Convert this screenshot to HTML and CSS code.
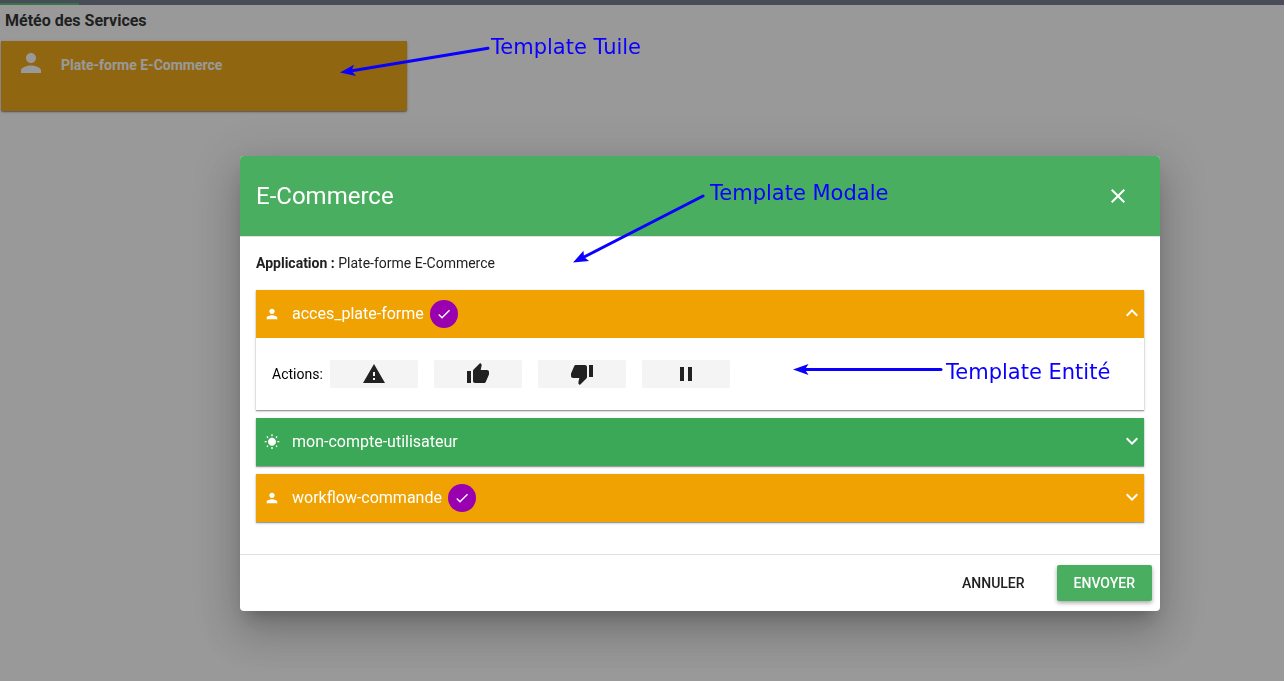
FILE: index.html
```html
<!DOCTYPE html>
<html lang="fr">
<head>
<meta charset="utf-8">
<title>Météo des Services</title>
<link rel="stylesheet" href="styles.css">
</head>
<body>
<svg class="sprite" aria-hidden="true">
  <symbol id="person" viewBox="0 0 24 24"><path d="M12 12c2.21 0 4-1.79 4-4s-1.79-4-4-4-4 1.79-4 4 1.79 4 4 4zm0 2c-2.67 0-8 1.34-8 4v2h16v-2c0-2.66-5.33-4-8-4z"/></symbol>
  <symbol id="sun" viewBox="0 0 24 24"><path d="M6.76 4.84l-1.8-1.79-1.41 1.41 1.79 1.79 1.42-1.41zM4 10.5H1v2h3v-2zm9-9.95h-2V3.5h2V.55zm7.45 3.91l-1.41-1.41-1.79 1.79 1.41 1.41 1.79-1.79zm-3.21 13.7l1.79 1.8 1.41-1.41-1.8-1.79-1.4 1.4zM20 10.5v2h3v-2h-3zm-8-5c-3.31 0-6 2.69-6 6s2.69 6 6 6 6-2.69 6-6-2.69-6-6-6zm-1 16.95h2V19.5h-2v2.95zm-7.45-3.91l1.41 1.41 1.79-1.8-1.41-1.41-1.79 1.8z"/></symbol>
  <symbol id="check" viewBox="0 0 24 24"><path d="M9 16.17L4.83 12l-1.42 1.41L9 19 21 7l-1.41-1.41z"/></symbol>
  <symbol id="close" viewBox="0 0 24 24"><path d="M19 6.41L17.59 5 12 10.59 6.41 5 5 6.41 10.59 12 5 17.59 6.41 19 12 13.41 17.59 19 19 17.59 13.41 12z"/></symbol>
  <symbol id="warning" viewBox="0 0 24 24"><path d="M1 21h22L12 2 1 21zm12-3h-2v-2h2v2zm0-4h-2v-4h2v4z"/></symbol>
  <symbol id="thumb-up" viewBox="0 0 24 24"><path d="M1 21h4V9H1v12zm22-11c0-1.1-.9-2-2-2h-6.31l.95-4.57.03-.32c0-.41-.17-.79-.44-1.06L14.17 1 7.59 7.59C7.22 7.95 7 8.45 7 9v10c0 1.1.9 2 2 2h9c.83 0 1.54-.5 1.84-1.22l3.02-7.05c.09-.23.14-.47.14-.73v-2z"/></symbol>
  <symbol id="thumb-down" viewBox="0 0 24 24"><path d="M15 3H6c-.83 0-1.54.5-1.84 1.22l-3.02 7.05c-.09.23-.14.47-.14.73v2c0 1.1.9 2 2 2h6.31l-.95 4.57-.03.32c0 .41.17.79.44 1.06L9.83 23l6.59-6.59c.36-.36.58-.86.58-1.41V5c0-1.1-.9-2-2-2zm4 0v12h4V3h-4z"/></symbol>
  <symbol id="pause" viewBox="0 0 24 24"><path d="M6 19h4V5H6v14zm8-14v14h4V5h-4z"/></symbol>
  <symbol id="more" viewBox="0 0 24 24"><path d="M16.59 8.59L12 13.17 7.41 8.59 6 10l6 6 6-6z"/></symbol>
  <symbol id="less" viewBox="0 0 24 24"><path d="M12 8l-6 6 1.41 1.41L12 10.83l4.59 4.58L18 14z"/></symbol>
</svg>

<main class="page">
  <div class="topbar"><div class="topbar-progress"></div></div>
  <h1 class="page-title">Météo des Services</h1>
  <section class="tile">
    <svg class="icon icon-tile"><use href="#person"/></svg>
    <h2 class="tile-name">Plate-forme E-Commerce</h2>
  </section>
</main>

<div class="backdrop">
  <div class="dialog" role="dialog" aria-modal="true" aria-labelledby="dialog-title">
    <header class="dialog-head">
      <h2 class="dialog-title" id="dialog-title">E-Commerce</h2>
      <button class="close" type="button" aria-label="Fermer"><svg class="icon"><use href="#close"/></svg></button>
    </header>
    <div class="dialog-body">
      <p class="application"><strong>Application :</strong> Plate-forme E-Commerce</p>
      <div class="entities">
        <section class="entity">
          <button class="entity-head warn" type="button" aria-expanded="true">
            <svg class="icon icon-small"><use href="#person"/></svg>
            <span class="entity-name">acces_plate-forme</span>
            <span class="badge"><svg class="icon icon-small"><use href="#check"/></svg></span>
            <svg class="icon chevron"><use href="#less"/></svg>
          </button>
          <div class="actions">
            <span class="actions-label">Actions:</span>
            <div class="actions-list">
              <button class="action" type="button" aria-label="Alerte"><svg class="icon"><use href="#warning"/></svg></button>
              <button class="action" type="button" aria-label="Approuver"><svg class="icon"><use href="#thumb-up"/></svg></button>
              <button class="action" type="button" aria-label="Refuser"><svg class="icon"><use href="#thumb-down"/></svg></button>
              <button class="action" type="button" aria-label="Pause"><svg class="icon"><use href="#pause"/></svg></button>
            </div>
          </div>
        </section>
        <section class="entity">
          <button class="entity-head ok" type="button" aria-expanded="false">
            <svg class="icon icon-small"><use href="#sun"/></svg>
            <span class="entity-name">mon-compte-utilisateur</span>
            <svg class="icon chevron"><use href="#more"/></svg>
          </button>
        </section>
        <section class="entity">
          <button class="entity-head warn" type="button" aria-expanded="false">
            <svg class="icon icon-small"><use href="#person"/></svg>
            <span class="entity-name">workflow-commande</span>
            <span class="badge"><svg class="icon icon-small"><use href="#check"/></svg></span>
            <svg class="icon chevron"><use href="#more"/></svg>
          </button>
        </section>
      </div>
    </div>
    <footer class="dialog-foot">
      <button class="btn" type="button">ANNULER</button>
      <button class="btn btn-primary" type="button">ENVOYER</button>
    </footer>
  </div>
</div>

<div class="notes">
  <svg class="arrows" aria-hidden="true">
    <path class="shaft" d="M488 48.300L352 70.700"/>
    <path class="shaft" d="M703 196L584 257"/>
    <path class="shaft" d="M941 369.500H805"/>
    <path class="tip" d="M340 72.500L354 64.700L351.500 70.700L356 76z"/>
    <path class="tip" d="M573 262.500L583.500 250.700L584 257L589 261z"/>
    <path class="tip" d="M793 369.500L808.500 364L805 369.500L808.500 375z"/>
  </svg>
  <span class="note note-tile">Template Tuile</span>
  <span class="note note-modal">Template Modale</span>
  <span class="note note-entity">Template Entité</span>
</div>
</body>
</html>
```
FILE: styles.css
```css
* { box-sizing: border-box; }

body {
  margin: 0;
  background: #fff;
  color: #212121;
  font-family: Roboto, sans-serif;
  font-size: 14px;
  line-height: 20px;
}

h1, h2, p { margin: 0; }

button {
  border: 0;
  padding: 0;
  background: none;
  color: inherit;
  font: inherit;
  cursor: pointer;
}

.sprite {
  position: absolute;
  width: 0;
  height: 0;
}

.icon {
  display: block;
  flex: none;
  width: 24px;
  height: 24px;
  fill: currentColor;
}
.icon-small { width: 16px; height: 16px; }
.icon-tile { width: 30px; height: 30px; }

.page {
  min-height: 100vh;
  padding-right: 1px;
}

.topbar { height: 5px; padding-top: 3px; background: #697187; }
.topbar-progress { width: 79px; height: 2px; background: #4bbe69; }

.page-title {
  padding: 6px 5px 4px;
  margin-bottom: 6px;
  font-size: 16px;
  font-weight: 700;
}

.tile {
  display: flex;
  align-items: flex-start;
  gap: 15px;
  width: 406px;
  max-width: 100%;
  min-height: 70px;
  margin-left: 1px;
  padding: 7px 15px;
  border-radius: 0 0 2px 2px;
  background: #f0a202;
  color: #fff;
  box-shadow: 0 1px 3px rgba(0, 0, 0, .3), 0 1px 1px rgba(0, 0, 0, .3);
}
.tile-name {
  padding-top: 7px;
  font-size: 14px;
  font-weight: 700;
}

.backdrop {
  position: fixed;
  inset: 0 1px 0 0;
  display: flex;
  align-items: center;
  justify-content: center;
  padding: 86px 0 0 116px;
  background: rgba(33, 33, 33, .46);
}

.dialog {
  width: 79%;
  max-width: 920px;
  border-radius: 4px;
  background: #fff;
  box-shadow: 0 11px 15px -7px rgba(0, 0, 0, .2), 0 24px 38px 3px rgba(0, 0, 0, .14), 0 9px 46px 8px rgba(0, 0, 0, .12);
}

.dialog-head {
  display: flex;
  align-items: center;
  justify-content: space-between;
  height: 81px;
  padding: 0 30px 0 16px;
  border-bottom: 1px solid #e0e0e0;
  border-radius: 4px 4px 0 0;
  background: #4aae60;
  background-clip: padding-box;
  color: #fff;
}
.dialog-title {
  font-size: 24px;
  font-weight: 400;
  line-height: 32px;
}

.dialog-body { padding: 16px 16px 32px; }
.application { margin-bottom: 17px; }

.entities { display: grid; gap: 8px; }
.entity {
  box-shadow: 0 1px 3px rgba(0, 0, 0, .2), 0 1px 1px rgba(0, 0, 0, .3);
}
.entity-head {
  display: flex;
  align-items: center;
  width: 100%;
  height: 48px;
  padding: 0 0 0 8px;
  color: #fff;
  font-size: 16px;
}
.warn { background: #f0a202; }
.ok { background: #3aa856; }
.entity-name { margin-left: 12px; }
.badge {
  display: grid;
  place-items: center;
  width: 28px;
  height: 28px;
  margin-left: 6px;
  border-radius: 50%;
  background: #9800b0;
}
.chevron { margin: 0 0 2px auto; }

.actions {
  display: flex;
  align-items: center;
  gap: 7px;
  padding: 22px 16px;
  color: #000;
}
.actions-list { display: flex; gap: 16px; }
.action {
  display: grid;
  place-items: center;
  width: 88px;
  height: 28px;
  border-radius: 2px;
  background: #f4f4f4;
  color: #212121;
}

.dialog-foot {
  display: flex;
  align-items: center;
  justify-content: flex-end;
  gap: 15px;
  height: 57px;
  padding: 0 8px;
  border-top: 1px solid #e0e0e0;
}
.btn {
  height: 36px;
  padding: 0 17px;
  border-radius: 2px;
  font-weight: 500;
}
.btn-primary {
  background: #4aae60;
  color: #fff;
  box-shadow: 0 2px 4px rgba(0, 0, 0, .35);
}

/* Annotation layer drawn over the whole page */
.notes {
  position: fixed;
  inset: 0;
  overflow: hidden;
  pointer-events: none;
  color: #0a00ff;
}
.arrows { width: 100%; height: 100%; }
.shaft { stroke: currentColor; stroke-width: 3; stroke-linecap: round; }
.tip { fill: currentColor; }
.note {
  position: absolute;
  font-family: "DejaVu Sans", sans-serif;
  font-size: 21px;
  line-height: 24px;
  white-space: nowrap;
}
.note-tile { left: 491px; top: 35px; }
.note-modal { left: 710px; top: 181px; }
.note-entity { left: 946px; top: 360px; }
```
